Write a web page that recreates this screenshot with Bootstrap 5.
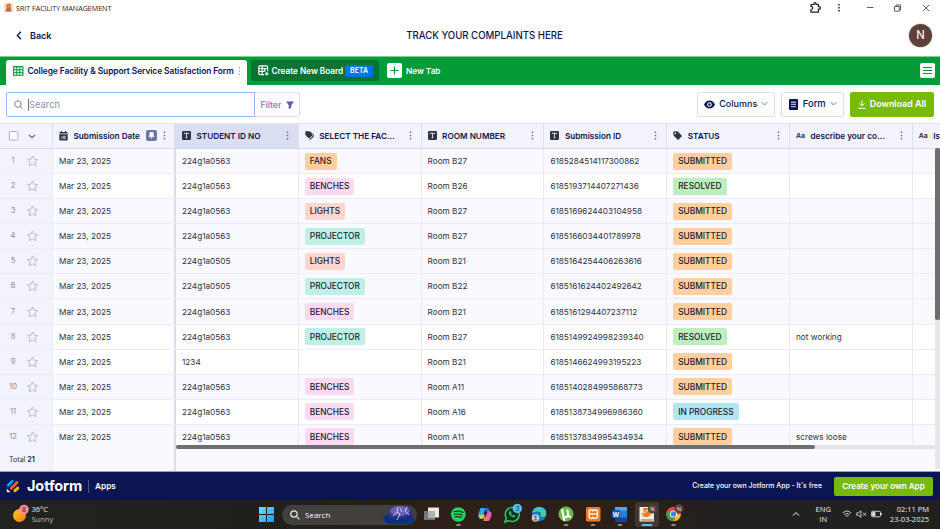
<!DOCTYPE html>
<html lang="en">
<head>
<meta charset="utf-8">
<title>SRIT FACILITY MANAGEMENT</title>
<link href="https://cdn.jsdelivr.net/npm/bootstrap@5.3.0/dist/css/bootstrap.min.css" rel="stylesheet">
<style>
body{width:940px;height:529px;overflow:hidden;font-family:Inter,"Liberation Sans",sans-serif;font-size:8.2px;line-height:12px;color:#2c3345;background:#fff}
svg{display:block;flex:none}
.sys{font-family:"Open Sans","Noto Sans",sans-serif}
.titlebar{height:15px;padding-left:4px;font-size:7.1px;color:#222}
.apphead{height:41px;color:#0a1551}
.back{width:70px;padding-left:16px;font-size:9px;font-weight:600}
.apptitle{font-size:9.65px;font-weight:500;padding-left:38px}
.avatar{width:23px;height:23px;background:#5d4037;color:#fff;font:12px Roboto,sans-serif;line-height:23px;box-shadow:0 0 0 1px #e4e4e8}
.tabsbar{height:29px;background:#049c38;padding:3px 5px 0 6px;border-top:1px solid #7fcf98}
.tab-on{width:241px;height:25px;background:#fff;border-radius:3px 3px 0 0;color:#0a1551;font-weight:600;font-size:8.4px;padding:0 0 3px 7px}
.tab-board{width:128px;height:21px;background:#087431;border-radius:2px;color:#fff;font-weight:600;font-size:8.25px;margin-left:4px;padding-left:6.5px}
.beta{background:#0075e3;border-radius:2px;font-size:7px;padding:0 5px;height:12px;margin-right:6px}
.tab-new{height:21px;font-weight:600;font-size:8.2px}
.toolbar{height:38px;padding:0 6px;color:#0a1551;font-size:9.4px;font-weight:500}
.search{width:248.5px;height:25px;border:1px solid #96b4fb;border-radius:2px 0 0 2px;color:#8d8fa8;padding:1px 0 0 7px;font-weight:400}
.caret{border-left:1px solid #6c6f86;margin-left:5px}
.filter{width:45.5px;height:25px;border:1px solid #dadef3;border-left:0;background:#fafaff;border-radius:0 2px 2px 0;color:#7780aa;font-size:8.6px;padding:1px 0 0 6px}
.tool{height:25px;border:1px solid #dadef3;border-radius:2px;padding:0 5.5px 0 6px}
.tool-cols{width:78px;font-size:9px}
.tool-form{width:63px;margin:0 6px}
.tool-dl{width:84px;background:#78bb07;border-color:#78bb07;color:#fff;font-weight:600;font-size:8.9px;padding:0}
.sheet{height:348px;background:#faf9ff;position:relative;overflow:hidden}
.sheet-rows{height:325px;overflow:hidden}
.line{display:flex;height:25.09px;width:1036px;border-bottom:1px solid #ebebfa}
.line.white{background:#fff}
.line.head{height:26px;background:#f3f3fe;border-top:1px solid #e3e5f5;border-bottom:1.5px solid #d6d6f6;color:#0a1551;font-weight:600}
.cel{width:122.8px;flex:none;border-right:1px solid #e9e9fb;padding-left:6px;display:flex;align-items:center;white-space:nowrap}
.head .cel{border-right-color:#dcdef5;padding-bottom:1px}
.cap{margin-left:5.5px}
.cel.c0{width:53px;background:#f3f3fe;color:#8b8da8;padding-left:0}
.cel.c1{width:123px;border-right:2px solid #dcdcee}
.cel.picked{background:#dadef3}
.num{width:26px;text-align:center;font-size:7.6px}
.aa{font-size:6.8px;font-weight:700;width:9px;color:#2c3345}
.more{color:#5f66a3;margin:0 9px 0 auto}
.chip{height:17px;border-radius:2px;padding:0 5px;display:flex;align-items:center;color:#23202c;font-weight:500;font-size:8.35px}
.FANS,.SUBMITTED{background:#ffcfa0}.BENCHES{background:#fcdaf3}.LIGHTS{background:#fdd6cd}
.PROJECTOR{background:#bff0e7}.RESOLVED{background:#bcefbd}.INPROGRESS{background:#b0e5f3}
.vbar{position:absolute;left:935px;top:25px;width:5px;height:321px;background:#e7e7ea}
.vbar i{display:block;width:5px;height:172px;background:#6e6e70;border-radius:2px}
.hbar{position:absolute;left:176px;top:321.5px;width:759px;height:4px;background:#e4e4e8}
.hbar i{display:block;width:639px;height:4px;background:#6e6e70;border-radius:2px}
.under{position:absolute;left:176px;top:325.5px;width:764px;height:23px;background:#faf9ff}
.totals{height:23px;font-size:7.1px}
.totals .c0{color:#2c3345;padding-left:9px}
.foot{height:29px;background:#0a1551;border-top:1px solid #9da1ba;color:#fff;padding:0 7px 0 6px;font-weight:600}
.brand{font-size:14.5px;font-weight:700;letter-spacing:-.1px;margin-left:7px}
.rule{width:1px;height:13px;background:#4d5582;margin:0 6px}
.make{width:99px;height:19px;background:#78bb07;border-radius:2px;font-size:8.1px}
.taskbar{height:29px;background:linear-gradient(90deg,#22231f 0,#211f1b 28%,#2d2018 47%,#2b1f1a 70%,#212121 77%,#20211f);color:#eee;font-size:7.5px;line-height:10px}
.box{width:135px;height:20px;border-radius:10px;background:#41403d;overflow:hidden}
.weather{width:259px;padding:0 0 2px 12px}
.t-form{letter-spacing:-.08px}
.t-eng{margin:0 11px 0 16px}
.t-clock{margin-left:8px}
.tray{padding:0 11px 1px 0}
.t-free{font-size:6.93px;font-weight:500;margin-right:12px}
</style>
<script src="https://cdn.jsdelivr.net/npm/bootstrap@5.3.0/dist/js/bootstrap.bundle.min.js"></script>
</head>
<body>
<svg width="0" height="0" class="position-absolute">
<defs>
<symbol id="dots" viewBox="0 0 3 9"><path d="M.8 .5h1.4v1.4H.8zM.8 3.8h1.4v1.4H.8zM.8 7.1h1.4v1.4H.8z" fill="currentColor"/></symbol>
<symbol id="txt" viewBox="0 0 9 9"><rect width="9" height="9" rx="1.2" fill="#2c3345"/><path d="M2.3 3.2V2.2h4.4v1M4.5 2.2v4.6M3.6 6.8h1.8" stroke="#fff" stroke-width=".8" fill="none"/></symbol>
<symbol id="tag" viewBox="0 0 9 9"><path d="M.3 1.2 1.2.3 5 .6 8.6 4.4Q9 5 8.6 5.5L5.7 8.4Q5 9 4.4 8.4L.6 4.6Z" fill="#2c3345"/><circle cx="2.4" cy="2.4" r=".8" fill="#f3f3fe"/></symbol>
<symbol id="tags" viewBox="0 0 9 9"><path d="M.2.9 1 .2 4 .3 7.200 3.500 7.200 4.600 4.600 7.200H3.500L.4 4Z" fill="#2c3345"/><path d="M5.200.6 8.700 4.200V5.400L5.500 8.600H4.500L8 5V4.100L4.800.9Z" fill="#2c3345" stroke="#2c3345" stroke-width=".4"/></symbol>
<symbol id="star" viewBox="0 0 12 12"><path d="M6 .9 7.5 4.2 11.2 4.6 8.5 7 9.2 10.7 6 8.9 2.8 10.7 3.5 7 .8 4.6 4.5 4.2Z" fill="none" stroke="#b3b6d3" stroke-width=".9" stroke-linejoin="round"/></symbol>
<symbol id="down" viewBox="0 0 8 6"><path d="M1.2 1.2 4 4.2 6.8 1.2" fill="none" stroke="currentColor" stroke-linecap="round"/></symbol>
</defs></svg>

<div class="titlebar sys d-flex align-items-center">
<svg width="9" height="9" viewBox="0 0 9 9"><rect width="9" height="9" fill="#f4ded2"/><circle cx="4.6" cy="3" r="2.5" fill="#ef7d20"/><path d="M2.5 5h4v3h-4zM1 8h7" fill="#a97458" stroke="#a97458" stroke-width=".7"/></svg>
<span class="flex-grow-1" style="padding-left:3px">SRIT FACILITY MANAGEMENT</span>
<svg width="135" height="15" viewBox="805 0 135 15" fill="none" stroke="#333"><path d="M811 4.500h3q-.3-1.800 1-1.800t1 1.800h2.400v2.200q2-.3 2 1.200t-2 1.200v3h-7.400v-2.600q1.700-.2 1.700-1.600t-1.700-1.500z" stroke="#222" stroke-width="1.200"/><path d="M838.300 4h1.500v1.500h-1.500zM838.300 7h1.500v1.500h-1.500zM838.300 10h1.500v1.500h-1.500z" fill="#222" stroke="none"/><path d="M867 7.500h6.500M923 5l6 6M929 5l-6 6" stroke-width=".8"/><path d="M894.500 6.500h4.700v4.700h-4.700zM896 6V5h4.500v4.800h-1" stroke-width=".8"/></svg>
</div>

<header class="apphead d-flex align-items-center justify-content-between pe-2">
<div class="back d-flex align-items-center gap-2"><svg width="6" height="9" viewBox="0 0 6 9"><path d="M5 .8 1.3 4.5 5 8.2" fill="none" stroke="#0a1551" stroke-width="1.3"/></svg><span>Back</span></div>
<div class="apptitle">TRACK YOUR COMPLAINTS HERE</div>
<div class="ps-5"><div class="avatar rounded-circle text-center">N</div></div>
</header>

<nav class="tabsbar d-flex">
<div class="tab-on d-flex align-items-center">
<svg width="10.500" height="10.500" viewBox="0 0 10 10"><rect width="10" height="10" rx="1" fill="#049c38"/><path d="M1.100 1.100h2v2h-2zM4 1.100h2v2H4zM6.900 1.100h2v2h-2zM1.100 4h2v2h-2zM4 4h2v2H4zM6.900 4h2v2h-2zM1.100 6.900h2v2h-2zM4 6.900h2v2H4zM6.900 6.900h2v2h-2z" fill="#dff5e6"/></svg>
<span class="flex-grow-1 ps-1 t-form">College Facility &amp; Support Service Satisfaction Form</span>
<svg width="3" height="10" style="color:#a9acd0;margin-right:6px"><use href="#dots"/></svg></div>
<div class="tab-board d-flex align-items-center">
<svg width="11" height="11" viewBox="0 0 11 11" fill="none" stroke="#fff" stroke-width="1.200"><path d="M6 9.600H2Q.8 9.600.8 8.500V2Q.8.8 2 .8h6.500Q9.600.8 9.600 2v4.300M.8 3.500h8.800M.8 6.400h5.600M4.200.8v8.800M6.800 3v3.500M8.700 7v3.600M6.900 8.800h3.600"/></svg>
<span style="margin-left:3px;letter-spacing:-.03px">Create New Board</span><span class="beta ms-auto">BETA</span></div>
<div class="tab-new d-flex align-items-center text-white ms-2"><svg width="15" height="15" viewBox="0 0 15 15"><rect width="15" height="15" rx="2" fill="#fff"/><path d="M7.500 3.500v8M3.500 7.500h8" stroke="#049c38" stroke-width="1.200"/></svg><span class="ps-1">New Tab</span></div>
<svg class="ms-auto" width="15" height="21" viewBox="0 0 15 21"><rect y="3" width="15" height="15" rx="2" fill="#fff"/><path d="M3 7.500h9M3 10.500h9M3 13.500h9" stroke="#049c38"/></svg>
</nav>

<div class="toolbar d-flex align-items-center">
<div class="search d-flex align-items-center"><svg width="9" height="9" viewBox="0 0 9 9" fill="none" stroke="#7780aa"><circle cx="4" cy="4" r="3.200"/><path d="m6.300 6.300 2.300 2.300"/></svg><span class="caret">Search</span></div>
<div class="filter d-flex align-items-center">Filter<svg width="8" height="8" style="margin-left:5px" viewBox="0 0 8 8"><path d="M.6.8h6.800L5 4.200v2.400L3 7.800V4.200Z" fill="#5c639c" stroke="#5c639c" stroke-width=".6"/></svg></div>
<div class="tool tool-cols ms-auto d-flex align-items-center justify-content-between"><svg width="11" height="9" viewBox="0 0 11 9"><path d="M0 4.500Q2 .5 5.500.5T11 4.500Q9 8.500 5.500 8.500T0 4.500Z" fill="#0a1551"/><circle cx="5.500" cy="4.500" r="2.300" fill="#fff"/><circle cx="5.500" cy="4.500" r="1.200" fill="#0a1551"/></svg><span>Columns</span><svg width="7" height="6" class="text-secondary"><use href="#down"/></svg></div>
<div class="tool tool-form d-flex align-items-center justify-content-between"><svg width="9" height="11" viewBox="0 0 9 11" style="margin-left:1px"><rect width="9" height="11" rx="1" fill="#0a1551"/><path d="M2 2.600h5v1.300H2zM2 4.800h5v1.300H2zM2 7h5v1.300H2z" fill="#aeb3d4"/></svg><span>Form</span><svg width="7" height="6" class="text-secondary"><use href="#down"/></svg></div>
<div class="tool tool-dl d-flex align-items-center justify-content-center"><svg width="8" height="9" class="me-1" viewBox="0 0 8 9" fill="none" stroke="#fff"><path d="M4 .3v5.200M1.600 3.400 4 5.800l2.400-2.400M.4 8.300h7.200"/></svg>Download All</div>
</div>

<main class="sheet">
<div class="sheet-rows" id="rows">
<div class="line head">
<div class="cel c0"><svg width="44" height="12" viewBox="0 0 44 12" fill="none"><rect x="9.300" y="1.500" width="8.600" height="8.600" rx="1.500" fill="#fff" stroke="#a9abc8"/><path d="m29 5 3 2.800L35 5" stroke="#5f66a3" stroke-width="1.200"/></svg></div>
<div class="cel c1"><svg width="9" height="10" viewBox="0 0 9 10"><path d="M.3 2Q.3 1 1.300 1H2V0h1v1h3V0h1v1h.7q1 0 1 1v.5H.3zM.3 3.200h8.400v5.300q0 1-1 1H1.300q-1 0-1-1z" fill="#2c3345"/><path d="M3 5v3M4.700 5.200h1.500v2.500H4.700z" stroke="#fff" stroke-width=".7" fill="none"/></svg><span class="cap">Submission Date</span><svg class="ms-auto" width="11" height="11" viewBox="0 0 11 11"><rect width="11" height="11" rx="2" fill="#6f76a7"/><path d="M3.900 2.500h3.200V5l.9 1.600H3L3.900 5zM5.500 6v2.800" fill="#fff" stroke="#fff" stroke-width=".7"/></svg><svg width="3" height="9" style="color:#5f66a3;margin:0 8px 0 6px"><use href="#dots"/></svg></div>
</div>
</div>
<div class="totals d-flex"><div class="cel c0"><span>Total <b>21</b></span></div><div class="cel c1"></div></div>
<div class="under"></div><div class="vbar"><i></i></div><div class="hbar"><i></i></div>
</main>

<footer class="foot d-flex align-items-center">
<svg width="14" height="14" viewBox="0 0 14 14" stroke-linecap="round" stroke-width="3"><path d="M2.300 6.200 6.200 2.400" stroke="#0099ff"/><path d="m5.300 9.200 5.800-5.700" stroke="#ff6100"/><path d="m9 11.700 2.700-2.600" stroke="#ffb629"/><path d="M.8 9.800v2.500q0 .9.900.9h2.700z" fill="#fff"/></svg>
<span class="brand">Jotform</span><span class="rule"></span><span>Apps</span>
<span class="ms-auto t-free">Create your own Jotform App - It's free</span><div class="make d-flex align-items-center justify-content-center">Create your own App</div>
</footer>

<div class="taskbar sys d-flex align-items-center">
<div class="weather d-flex align-items-center"><svg width="17" height="19" viewBox="0 0 17 19"><defs><linearGradient id="sun" x2="1" y2="1"><stop stop-color="#ffc928"/><stop offset="1" stop-color="#f07a0c"/></linearGradient></defs><circle cx="7.500" cy="11.500" r="6.500" fill="url(#sun)"/><circle cx="12" cy="5.500" r="4.800" fill="#f28b9b"/><text x="10" y="8.200" font-size="7" fill="#222">8</text></svg><div style="margin-left:2.500px">36°C<br><span style="color:#bbb">Sunny</span></div></div>
<svg width="16" height="15" viewBox="0 0 16 15" class="me-2"><defs><linearGradient id="win" x2="1" y2="1"><stop stop-color="#75dcff"/><stop offset="1" stop-color="#159eef"/></linearGradient></defs><path d="M0 0h7v7H0zM8 0h7v7H8zM0 8h7v7H0zM8 8h7v7H8z" fill="url(#win)"/></svg>
<div class="box d-flex align-items-center" style="margin-left:-1px"><svg width="10" height="10" viewBox="0 0 10 10" class="ms-2" fill="none" stroke="#eee" stroke-width="1.200"><circle cx="4" cy="4" r="3.200"/><path d="m6.400 6.400 3 3"/></svg><span class="text-light" style="font-size:8px;margin-left:5px">Search</span>
<svg class="ms-auto" style="margin-right:3px" width="31" height="18" viewBox="0 0 31 18"><path d="M4 7Q6 1 14 1h12q4 2 4 8v6q-3 2-6 2H5q-4-2-3-5z" fill="#34347c"/><ellipse cx="17" cy="5" rx="10" ry="5" fill="#6660b8"/><path d="M0 12q1-3 4-3 3 0 4 3l3 1q2-4 5-2l2 1 5-1q2-3 5-1l3 3v3l-4 2H6l-5-3z" fill="#0a3188"/><path d="m15 1-1 5 3 2-3 6M14 6l-4 4M24 1l-2 4 4 4M17 2l2 4" fill="none" stroke="#eee7ff" stroke-width=".8"/></svg></div>
<svg width="270" height="29" viewBox="417 500 270 29">
<rect x="424" y="511" width="11" height="9" fill="#777"/><rect x="428" y="507.500" width="11" height="10" fill="#e9e9e9"/><rect x="428" y="511" width="7" height="6.500" fill="#b1b1b1"/>
<circle cx="458.300" cy="514.500" r="7.300" fill="#1ed760"/><path d="M454 511.800q4.500-1.600 9 .6M454.500 514.500q4-1.200 7.700.6M455 517q3.400-1 6.500.5" stroke="#17351f" stroke-width="1.200" fill="none" stroke-linecap="round"/>
<path d="M480.500 508h5l-3.500 11h-2q-2-1-1.500-5z" fill="#2da9ef"/><path d="M484 508h3.500q1.500 0 2.500 4.500h-3z" fill="#2670dc"/><path d="M478.500 515l2 3.500h3l1.500-4z" fill="#f4c531"/><path d="m488 511 3 1q1.500 2 0 5l-2 4h-5.500z" fill="#e65bc5"/><path d="M484 517h6l-2 4h-4.500z" fill="#f0775c"/>
<path d="m505 522 1.200-4a7 7 0 1 1 2.600 2.600z" fill="#182d1e" stroke="#25d366" stroke-width="1.500"/><path d="M509 511.500q-.5 4.500 5 6l1.500-1.700-2-1-1 .8q-1.400-.7-1.700-1.800l.7-.9-.7-1.700z" fill="#25d366"/><circle cx="517.300" cy="508.500" r="4.700" fill="#4cc2ff"/><text x="515.400" y="511" font-size="7" fill="#17272e">3</text>
<circle cx="539" cy="514" r="7.300" fill="#1478c9"/><path d="M532 513a7.200 7.200 0 0 1 14.300 1q-.5 3.500-4.500 3-2-.5-1-2 .7-3-3-3.500-4-.3-5.800 1.500" fill="#47cf9b"/><path d="M532.500 511q3-4 8-3.800 5 .5 6 5-6-5-14-1.200" fill="#39bdf0"/><circle cx="535.500" cy="518" r="3.800" fill="#ccc"/><circle cx="535.500" cy="516.800" r="1.300" fill="#666"/><path d="M533.300 520.500q2.200-3.500 4.400 0z" fill="#666"/>
<circle cx="566" cy="514" r="7.500" fill="#6eb94b"/><path d="m562 509 1 6q.7 3 3.500 2 2-1 1.500-4l-.8-3.500M568 515q1 2.500 3 1.500M563 514l1.200 7" stroke="#fff" stroke-width="2" fill="none"/>
<rect x="586" y="507" width="14.500" height="14.500" rx="1.500" fill="#f57b20"/><path d="M590.500 510h1.500q1.300.3 1.300 1.500 0-1.200 1.300-1.500h1.500q1.500.4 1.500 2t-1 2q1 .6 1 2t-1.500 2.400h-1.500q-1.300-.3-1.300-1.500 0 1.200-1.300 1.500h-1.500q-1.500-.8-1.500-2.400t1-2q-1-.6-1-2t1.500-2z" fill="none" stroke="#fff" stroke-width="1.400"/><path d="M591 514h4.600" stroke="#fff" stroke-width="1.300"/>
<rect x="615" y="507" width="12" height="14.500" rx="1" fill="#2b7cd3"/><path d="M615 507h12v3.700h-12z" fill="#50a5ee"/><path d="M615 517.500h12v4h-12z" fill="#174590"/><rect x="612" y="510" width="8" height="8" rx=".7" fill="#1857af"/><text x="612.700" y="516.500" font-size="6.500" font-weight="700" fill="#fff">W</text>
<rect x="635" y="502" width="24" height="25" rx="2" fill="#403733"/><rect x="639.500" y="507" width="14.500" height="14.500" fill="#f7eadd"/><path d="M643 508h7l-1 4 2 2-3 3h-4l-2-3 2-2z" fill="#ef7d20"/><path d="M644 513l4-3" stroke="#fff4e8"/><path d="M641 520h12" stroke="#9a6042"/><circle cx="652.300" cy="509" r="4.500" fill="#5d4037"/><text x="650.200" y="511.200" font-size="5.500" fill="#eee">N</text>
<circle cx="673.500" cy="514" r="7.300" fill="#e8453c"/><path d="M667.200 510.500 673.500 514v7.300a7.300 7.300 0 0 1-6.300-10.800" fill="#2fa552"/><path d="M673.500 514h7.300a7.300 7.300 0 0 1-7.300 7.300l3-5.300z" fill="#fbbd0a"/><circle cx="673.500" cy="514" r="3.500" fill="#fff"/><circle cx="673.500" cy="514" r="2.700" fill="#3f83f2"/><circle cx="679" cy="508.800" r="4.500" fill="#5d4037"/><text x="677" y="511" font-size="5.500" fill="#eee">N</text>
<path d="M457 525h3M564.500 525h3M591.500 525h3M618.500 525h3M672 525h3" stroke="#aaa" stroke-width="1.600" stroke-linecap="round"/><path d="M642.500 525h9" stroke="#4cc2ff" stroke-width="1.800" stroke-linecap="round"/>
</svg>
<div class="tray ms-auto d-flex align-items-center"><svg width="8" height="6" viewBox="0 0 8 6"><path d="m1 4.600 3-3 3 3" stroke="#fff" fill="none"/></svg>
<div class="text-center t-eng">ENG<br>IN</div>
<svg width="40" height="10" viewBox="0 0 40 10" fill="none" stroke="#ddd" stroke-width=".9"><path d="M.8 4q4.200-4 8.400 0M2.200 5.700q2.800-2.700 5.600 0M3.600 7.300q1.400-1.300 2.800 0M14.800 3.800h1.600l2.500-2v6.500l-2.500-2h-1.600zM21 3.700l3 3M24 3.700l-3 3M30.500 2.300h7q1 0 1 1v3.500q0 1-1 1h-7q-1 0-1-1V3.300q0-1 1-1M39.500 4v2"/><path d="M30.500 3.300h2.500v3.500h-2.500z" fill="#ddd"/></svg>
<div class="text-end t-clock">02:11 PM<br>23-03-2025</div></div>
</div>

<script>
const heads=[['txt','STUDENT ID NO'],['tags','SELECT THE FAC...'],['txt','ROOM NUMBER'],['txt','Submission ID'],['tag','STATUS'],['aa','describe your co...'],['aa','Is']];
const data=[
['224g1a0563','FANS','Room B27','6185284514117300862','SUBMITTED',''],
['224g1a0563','BENCHES','Room B26','6185193714407271436','RESOLVED',''],
['224g1a0563','LIGHTS','Room B27','6185169624403104958','SUBMITTED',''],
['224g1a0563','PROJECTOR','Room B27','6185166034401789978','SUBMITTED',''],
['224g1a0505','LIGHTS','Room B21','6185164254406263616','SUBMITTED',''],
['224g1a0505','PROJECTOR','Room B22','6185161624402492642','SUBMITTED',''],
['224g1a0563','BENCHES','Room B21','6185161294407237112','SUBMITTED',''],
['224g1a0563','PROJECTOR','Room B27','6185149924998239340','RESOLVED','not working'],
['1234','','Room B21','6185146624993195223','SUBMITTED',''],
['224g1a0563','BENCHES','Room A11','6185140284995868773','SUBMITTED',''],
['224g1a0563','BENCHES','Room A16','6185138734996986360','IN PROGRESS',''],
['224g1a0563','BENCHES','Room A11','6185137834995434934','SUBMITTED','screws loose']];
const white=[2,8,9,11];
const chip=t=>t?`<span class="chip ${t.replace(' ','')}">${t}</span>`:'';
document.querySelector('.head').insertAdjacentHTML('beforeend',heads.map(([k,t],i)=>`<div class="cel ${i?'':'picked'}">${k==='aa'?'<span class="aa">Aa</span>':`<svg width="9" height="9"><use href="#${k}"/></svg>`}<span class="cap">${t}</span><svg width="3" height="9" class="more"><use href="#dots"/></svg></div>`).join(''));
document.getElementById('rows').insertAdjacentHTML('beforeend',data.map((r,i)=>`<div class="line ${white.includes(i+1)?'white':''}"><div class="cel c0"><span class="num">${i+1}</span><svg width="13" height="12"><use href="#star"/></svg></div><div class="cel c1">Mar 23, 2025</div><div class="cel">${r[0]}</div><div class="cel">${chip(r[1])}</div><div class="cel">${r[2]}</div><div class="cel">${r[3]}</div><div class="cel">${chip(r[4])}</div><div class="cel">${r[5]}</div><div class="cel"></div></div>`).join(''));
</script>
</body>
</html>
